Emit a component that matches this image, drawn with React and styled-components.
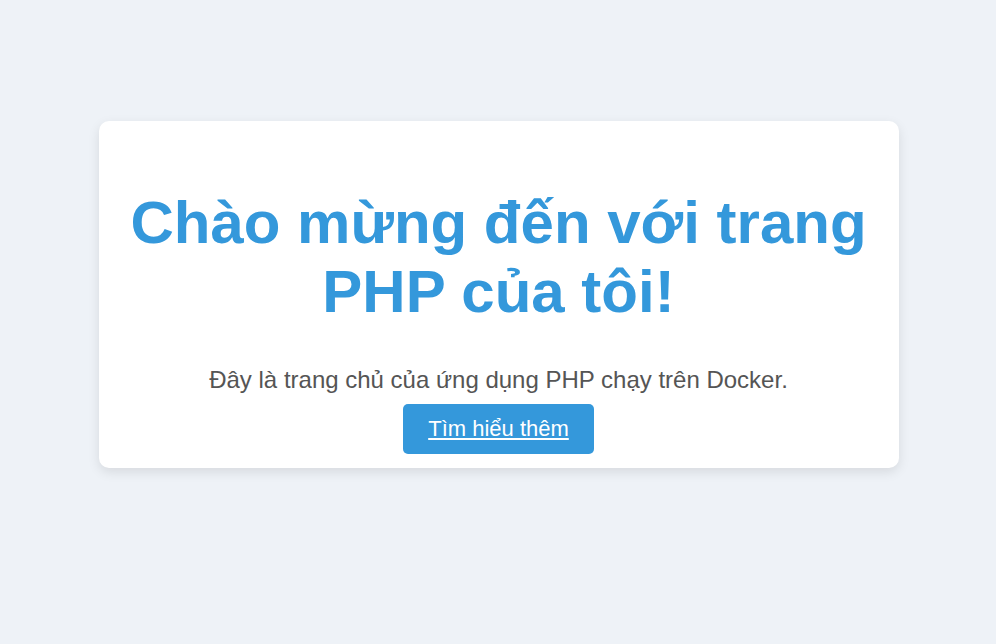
import React from "react";
import styled, { createGlobalStyle } from "styled-components";

const GlobalStyle = createGlobalStyle`
  html, body {
    margin: 0;
    padding: 0;
  }
  body {
    background: #eef2f7;
    font-family: "Liberation Sans", Arial, sans-serif;
    min-height: 100vh;
  }
`;

const Page = styled.div`
  padding: 121px 20px 40px 21px;
`;

const Card = styled.div`
  max-width: 800px;
  margin: 0 auto;
  background: #ffffff;
  border-radius: 10px;
  box-shadow: 0 4px 12px rgba(0, 0, 0, 0.1);
  padding: 27px 20px 14px;
  text-align: center;
  box-sizing: border-box;
`;

const Title = styled.h1`
  color: #3498db;
  font-size: 60px;
  font-weight: bold;
  line-height: 69px;
  margin: 40px 0 40px;
`;

const Lead = styled.p`
  color: #555555;
  font-size: 24px;
  line-height: 28px;
  margin: 0 0 10px;
`;

const MoreLink = styled.a`
  display: inline-block;
  background: #3498db;
  color: #ffffff;
  font-size: 22px;
  line-height: 26px;
  padding: 12px 25px;
  border-radius: 5px;
  text-decoration: underline;
`;

export default function App() {
  return (
    <>
      <GlobalStyle />
      <Page>
        <Card>
          <Title>Chào mừng đến với trang PHP của tôi!</Title>
          <Lead>Đây là trang chủ của ứng dụng PHP chạy trên Docker.</Lead>
          <MoreLink href="#">Tìm hiểu thêm</MoreLink>
        </Card>
      </Page>
    </>
  );
}
